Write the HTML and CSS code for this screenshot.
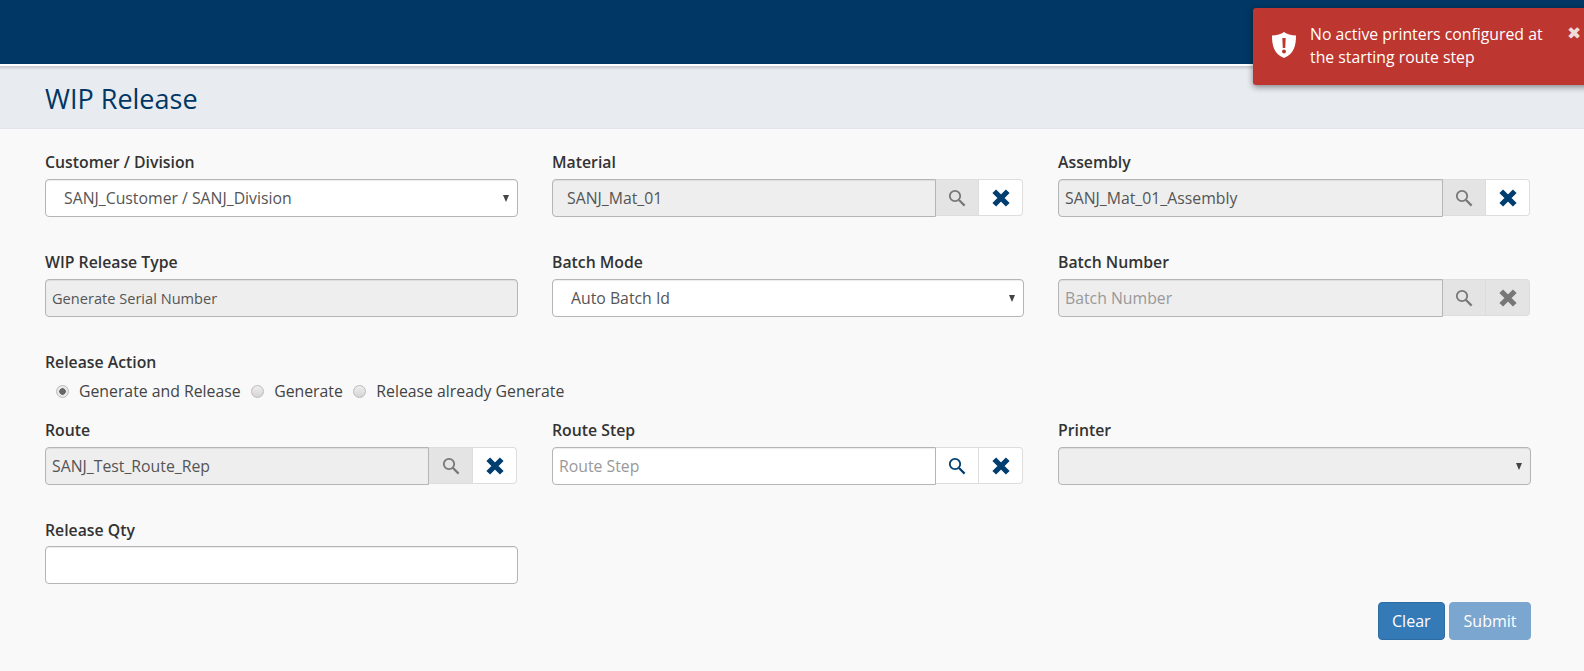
FILE: index.html
```html
<!DOCTYPE html>
<html lang="en">
<head>
    <meta charset="UTF-8">
    <title>WIP Release</title>
    <link rel="stylesheet" href="styles.css">
</head>
<body>
<svg class="icon-defs" width="0" height="0">
    <symbol id="search" viewBox="0 0 18 18">
        <circle cx="7" cy="7" r="5.2" fill="none" stroke="currentColor" stroke-width="1.8"/>
        <path d="M11 11l5.6 5.6" fill="none" stroke="currentColor" stroke-width="2.2"/>
    </symbol>
    <symbol id="remove" viewBox="0 0 16 16">
        <path d="M2.6 2.6l10.8 10.8M13.4 2.6L2.6 13.4" fill="none" stroke="currentColor" stroke-width="4.2"/>
    </symbol>
</svg>

<header class="topbar"></header>

<div class="toast">
    <svg class="toast-icon" viewBox="0 0 26 28">
        <path fill="#fff" fill-rule="evenodd" d="M13 1c3 2 7 3.4 12 3.6 0 10-2 18.500-12 22.400C3 23.100 1 14.600 1 4.600 6 4.400 10 3 13 1zM11.300 7l.5 10h2.400l.5-10zM13 18.500a2 2 0 1 0 0 4 2 2 0 0 0 0-4z"/>
    </svg>
    <div class="toast-text">No active printers configured at the starting route step</div>
    <span class="toast-close">&#10006;</span>
</div>

<div class="title-band">
    <h1>WIP Release</h1>
</div>

<form class="release-form">
    <div class="form-row row-1">
        <div class="field">
            <label>Customer / Division</label>
            <div class="select-box">
                <select class="pad-wide">
                    <option>SANJ_Customer / SANJ_Division</option>
                </select>
            </div>
        </div>
        <div class="field">
            <label>Material</label>
            <div class="lookup">
                <input class="pad-mid" type="text" value="SANJ_Mat_01" disabled>
                <span class="addon addon-off"><svg class="ic-search"><use href="#search"/></svg></span>
                <span class="addon addon-on"><svg class="ic-remove"><use href="#remove"/></svg></span>
            </div>
        </div>
        <div class="field">
            <label>Assembly</label>
            <div class="lookup">
                <input type="text" value="SANJ_Mat_01_Assembly" disabled>
                <span class="addon addon-off"><svg class="ic-search"><use href="#search"/></svg></span>
                <span class="addon addon-on"><svg class="ic-remove"><use href="#remove"/></svg></span>
            </div>
        </div>
    </div>

    <div class="form-row row-2">
        <div class="field">
            <label>WIP Release Type</label>
            <input class="plain" type="text" value="Generate Serial Number" disabled>
        </div>
        <div class="field">
            <label>Batch Mode</label>
            <div class="select-box">
                <select class="pad-wide">
                    <option>Auto Batch Id</option>
                </select>
            </div>
        </div>
        <div class="field">
            <label>Batch Number</label>
            <div class="lookup">
                <input type="text" placeholder="Batch Number" disabled>
                <span class="addon addon-off"><svg class="ic-search"><use href="#search"/></svg></span>
                <span class="addon addon-off"><svg class="ic-remove off"><use href="#remove"/></svg></span>
            </div>
        </div>
    </div>

    <div class="release-action">
        <label>Release Action</label>
        <div class="radios">
            <span class="radio-item"><input type="radio" name="action" checked>Generate and Release</span>
            <span class="radio-item"><input type="radio" name="action">Generate</span>
            <span class="radio-item"><input type="radio" name="action">Release already Generate</span>
        </div>
    </div>

    <div class="form-row row-3">
        <div class="field">
            <label>Route</label>
            <div class="lookup lookup-short">
                <input type="text" value="SANJ_Test_Route_Rep" disabled>
                <span class="addon addon-off"><svg class="ic-search"><use href="#search"/></svg></span>
                <span class="addon addon-on"><svg class="ic-remove"><use href="#remove"/></svg></span>
            </div>
        </div>
        <div class="field">
            <label>Route Step</label>
            <div class="lookup">
                <input class="live" type="text" placeholder="Route Step">
                <span class="addon addon-on"><svg class="ic-search live-ic"><use href="#search"/></svg></span>
                <span class="addon addon-on"><svg class="ic-remove"><use href="#remove"/></svg></span>
            </div>
        </div>
        <div class="field">
            <label>Printer</label>
            <div class="select-box">
                <select disabled><option></option></select>
            </div>
        </div>
    </div>

    <div class="form-row row-4">
        <div class="field">
            <label>Release Qty</label>
            <input class="live" type="text">
        </div>
    </div>

    <div class="actions">
        <button type="button" class="btn">Clear</button>
        <button type="button" class="btn btn-off">Submit</button>
    </div>
</form>
</body>
</html>
```

FILE: styles.css
```css
* {
    box-sizing: border-box;
}
html, body {
    height: 100%;
}
body {
    margin: 0;
    background-color: #f9f9f9;
    color: #333;
    font-family: "Open Sans", sans-serif;
    font-size: 15.8px;
    overflow: hidden;
}
.icon-defs {
    display: block;
    height: 0;
}
.topbar {
    height: 64px;
    background-color: #003764;
}
.title-band {
    height: 65px;
    padding: 15px 45px 0;
    background: linear-gradient(rgba(0, 0, 0, 0.16), rgba(0, 0, 0, 0) 4px), #e8ebf0;
    border-top: 2px solid #fff;
    border-bottom: 1px solid #e1e5ea;
}
h1 {
    margin: 0;
    font-size: 27px;
    font-weight: 400;
    line-height: 36px;
    color: #003764;
}

/* form */
.release-form {
    padding: 21px 53px 0 45px;
}
.form-row {
    display: grid;
    grid-template-columns: 473px 472px 473px;
    column-gap: 34px;
}
.row-2 {
    margin-top: 33px;
}
.row-3 {
    margin-top: 15px;
}
.row-4 {
    margin-top: 33px;
}
label {
    display: block;
    height: 24px;
    margin-bottom: 5px;
    font-weight: 600;
    font-size: 15.8px;
    line-height: 24px;
    color: #333;
}
.row-4 label {
    margin-bottom: 4px;
}
input[type="text"], select {
    width: 100%;
    height: 38px;
    padding: 0 6px;
    font-family: inherit;
    font-size: 15.8px;
    color: #555;
    background-color: #eee;
    border: 1px solid #b5b5b5;
    border-radius: 4px;
    box-shadow: inset 0 1px 1px rgba(0, 0, 0, 0.075);
    opacity: 1;
}
input.plain {
    font-size: 14.6px;
}
input::placeholder {
    color: #999;
    opacity: 1;
}
input.live {
    background-color: #fff;
}
input.pad-mid {
    padding-left: 14px;
}

/* select */
.select-box {
    position: relative;
}
.select-box select {
    appearance: none;
    background-color: #fff;
    padding-right: 24px;
}
.select-box select:disabled {
    background-color: #eee;
}
select.pad-wide {
    padding-left: 18px;
}
.select-box::after {
    content: "";
    position: absolute;
    top: 16px;
    right: 9px;
    border-left: 3px solid transparent;
    border-right: 3px solid transparent;
    border-top: 7px solid #444;
    pointer-events: none;
}

/* lookup input + buttons */
.lookup {
    display: flex;
    align-items: flex-start;
    width: calc(100% - 1px);
}
.lookup input[type="text"] {
    flex: 1;
    min-width: 0;
    border-radius: 4px 0 0 4px;
}
.lookup-short {
    width: 472px;
}
.addon {
    display: flex;
    align-items: center;
    justify-content: center;
    flex: none;
    height: 37px;
    border: 1px solid #ddd;
    border-left: 0;
}
.addon:nth-of-type(1) {
    width: 43px;
    background-color: #fff;
}
.lookup-short .addon:nth-of-type(1) {
    width: 44px;
}
.addon:last-child {
    width: 44px;
    border-radius: 0 4px 4px 0;
}
.addon-off {
    background-color: #e4e4e4 !important;
}
.addon-on {
    background-color: #fff;
}
.ic-search {
    width: 18px;
    height: 18px;
    color: #777;
}
.ic-search.live-ic {
    color: #003e6f;
}
.ic-remove {
    width: 20px;
    height: 20px;
    color: #003e6f;
}
.ic-remove.off {
    color: #777;
}

/* radios */
.release-action {
    margin-top: 33px;
}
.release-action label {
    margin-bottom: 5px;
}
.radios {
    display: flex;
    height: 24px;
    padding-left: 11px;
    align-items: center;
    gap: 10.5px;
    line-height: 24px;
    color: #444;
}
.radio-item {
    display: flex;
    align-items: center;
}
.radio-item input {
    appearance: none;
    width: 13px;
    height: 13px;
    margin: 0 10px 0 0;
    border: 1px solid #bbb;
    border-radius: 50%;
    background: linear-gradient(#eee, #d5d5d5);
}
.radio-item input:checked {
    background: radial-gradient(circle, #666 0 3px, #e8e8e8 3.5px);
}

/* buttons */
.actions {
    display: flex;
    justify-content: flex-end;
    gap: 4px;
    margin-top: 18px;
    width: 1486px;
}
.btn {
    height: 38px;
    padding: 0 13.5px;
    font-family: inherit;
    font-size: 16px;
    color: #fff;
    background-color: #337ab7;
    border: 1px solid #2e6da4;
    border-radius: 4px;
}
.btn-off {
    background-color: #7ba6cf;
    border-color: #7ba6cf;
}

/* toast */
.toast {
    position: absolute;
    top: 8px;
    left: 1253px;
    width: 345px;
    height: 77px;
    display: flex;
    align-items: center;
    padding: 0 45px 2px 18px;
    background-color: #bd362f;
    border-radius: 3px;
    box-shadow: 0 2px 6px rgba(0, 0, 0, 0.45);
    color: #fff;
}
.toast-icon {
    flex: none;
    width: 26px;
    height: 28px;
    margin: 0 13px 2px 0;
}
.toast-text {
    font-size: 15.8px;
    line-height: 23px;
}
.toast-close {
    position: absolute;
    top: 17px;
    left: 314px;
    font-size: 17px;
    line-height: 16px;
    color: #eedcdb;
}
```
